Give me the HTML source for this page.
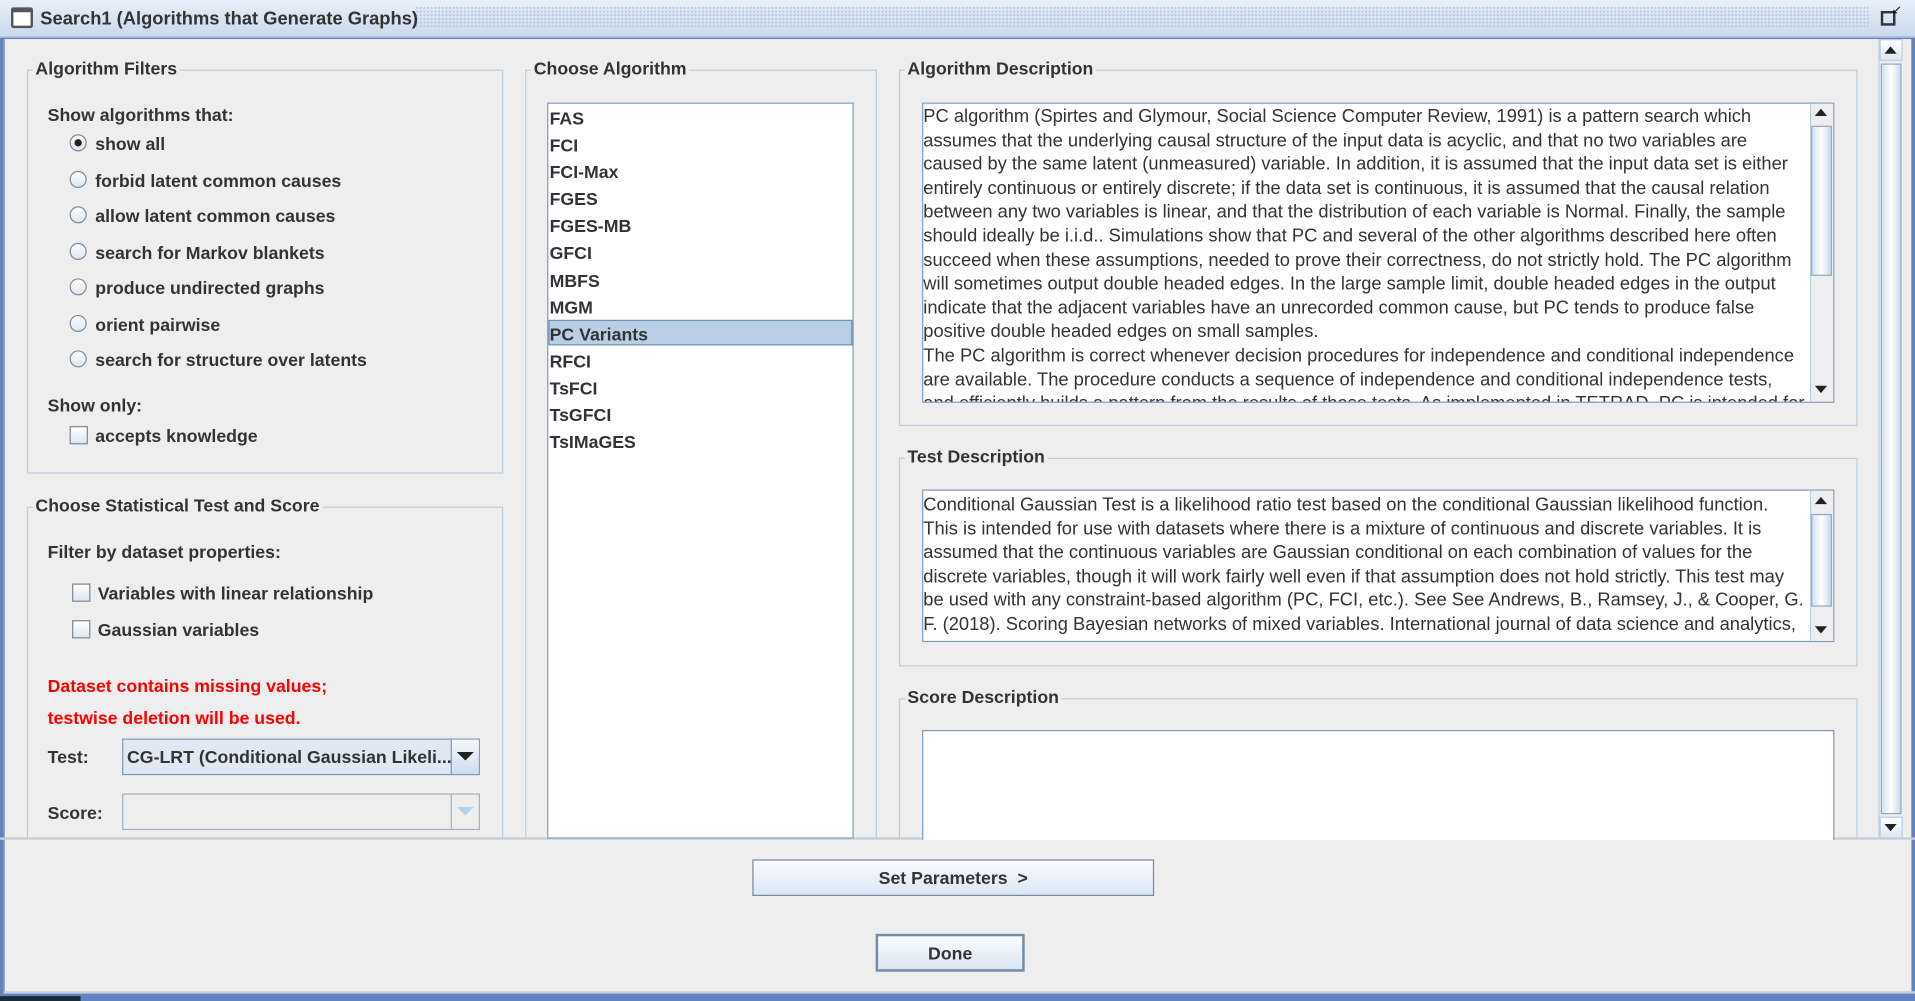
<!DOCTYPE html>
<html><head><meta charset="utf-8"><style>
*{box-sizing:border-box;margin:0;padding:0}
html,body{width:1915px;height:1001px;overflow:hidden;background:#6382bf}
#s{position:absolute;left:0;top:0;width:1568px;height:820px;transform:scale(1.2213,1.2207);transform-origin:0 0;font-family:"Liberation Sans",sans-serif;color:#333}
.a{position:absolute}
.b{font-weight:bold;font-size:14.5px;color:#333;padding-top:2px}
.grp{position:absolute;border:1px solid #b8cfe5}
.gt{position:absolute;top:-9px;left:4px;background:#eee;padding:0 2px;font-weight:bold;font-size:14.5px;color:#333}
.rad{position:absolute;width:14px;height:14px;border-radius:50%;border:1px solid #7a8a9c;background:linear-gradient(#fff,#dde6f0)}
.chk{position:absolute;width:15px;height:15px;border:1px solid #7a8a9c;background:linear-gradient(#fff,#dde6f0)}
.txt{font-size:15px;line-height:19.6px;color:#333;white-space:nowrap;padding-top:1px}
.sb{position:absolute;background:#eee;border-left:1px solid #b8cfe5}
.thumb{position:absolute;border:1px solid #8fa9c8;background:linear-gradient(90deg,#d5e3f2,#fff 50%,#c9dbee)}
.btn{position:absolute;border:1px solid #7a8a9c;background:linear-gradient(#fafcff,#dbe6f3);font-weight:bold;font-size:14.5px;text-align:center;color:#333}
</style></head><body><div id="s">
<div class="a" style="left:0;top:0;width:1568px;height:31px;background:linear-gradient(#e8f0f9,#c9d9ec);border-bottom:1px solid #a9bcd6"></div>
<div class="a" style="left:340px;top:5px;width:1190px;height:18px;background-image:radial-gradient(#b5c8e0 0.8px,transparent 1px);background-size:3px 3px"></div>
<div class="a" style="left:9px;top:6px;width:18px;height:17px;border:2px solid #555;border-top-width:4px;background:#fff;border-radius:2px"></div>
<div class="a b" style="left:33px;top:5px;font-size:15px">Search1 (Algorithms that Generate Graphs)</div>
<div class="a" style="left:1540px;top:9px;width:12px;height:12px;border:2px solid #333"></div>
<div class="a" style="left:1549px;top:3px;font-size:10px;color:#000">↙</div>
<div class="a" style="left:3px;top:32px;width:1562px;height:781px;background:#eee;border-left:1px solid #8a9cb5"></div>
<div class="sb" style="left:1538px;top:32px;width:20px;height:655px"></div>
<div class="a" style="left:1539px;top:32px;width:19px;height:18px;background:linear-gradient(#fff,#dde6f0);border:1px solid #b8cfe5"></div>
<div class="a" style="left:1543px;top:38px;border:5px solid transparent;border-bottom:6px solid #222;border-top:0"></div>
<div class="thumb" style="left:1540px;top:52px;width:17px;height:615px"></div>
<div class="a" style="left:1539px;top:669px;width:19px;height:18px;background:linear-gradient(#fff,#dde6f0);border:1px solid #b8cfe5"></div>
<div class="a" style="left:1543px;top:675px;border:5px solid transparent;border-top:6px solid #222;border-bottom:0"></div>
<div class="a" style="left:0;top:686px;width:1568px;height:2px;background:#c5cfda"></div>

<div class="grp" style="left:22px;top:57px;width:390px;height:331px"><div class="gt">Algorithm Filters</div></div>
<div class="a b" style="left:39px;top:85px">Show algorithms that:</div>
<div class="rad" style="left:57px;top:110px"></div><div class="a" style="left:61px;top:114px;width:6px;height:6px;border-radius:50%;background:#222"></div>
<div class="a b" style="left:78px;top:109px">show all</div>
<div class="rad" style="left:57px;top:140px"></div><div class="a b" style="left:78px;top:139px">forbid latent common causes</div>
<div class="rad" style="left:57px;top:169px"></div><div class="a b" style="left:78px;top:168px">allow latent common causes</div>
<div class="rad" style="left:57px;top:199px"></div><div class="a b" style="left:78px;top:198px">search for Markov blankets</div>
<div class="rad" style="left:57px;top:228px"></div><div class="a b" style="left:78px;top:227px">produce undirected graphs</div>
<div class="rad" style="left:57px;top:258px"></div><div class="a b" style="left:78px;top:257px">orient pairwise</div>
<div class="rad" style="left:57px;top:287px"></div><div class="a b" style="left:78px;top:286px">search for structure over latents</div>
<div class="a b" style="left:39px;top:323px">Show only:</div>
<div class="chk" style="left:57px;top:349px"></div><div class="a b" style="left:78px;top:348px">accepts knowledge</div>

<div class="grp" style="left:22px;top:415px;width:390px;height:290px"><div class="gt">Choose Statistical Test and Score</div></div>
<div class="a b" style="left:39px;top:443px">Filter by dataset properties:</div>
<div class="chk" style="left:59px;top:478px"></div><div class="a b" style="left:80px;top:477px">Variables with linear relationship</div>
<div class="chk" style="left:59px;top:508px"></div><div class="a b" style="left:80px;top:507px">Gaussian variables</div>
<div class="a b" style="left:39px;top:553px;color:#f00">Dataset contains missing values;</div>
<div class="a b" style="left:39px;top:579px;color:#f00">testwise deletion will be used.</div>
<div class="a b" style="left:39px;top:611px">Test:</div>
<div class="a" style="left:100px;top:605px;width:293px;height:30px;border:1px solid #7f9ab8;background:#dfe8f3"></div>
<div class="a b" style="left:104px;top:611px">CG-LRT (Conditional Gaussian Likeli...</div>
<div class="a" style="left:369px;top:606px;width:23px;height:28px;border-left:1px solid #7f9ab8;background:linear-gradient(#f4f8fd,#cfdced)"></div>
<div class="a" style="left:374px;top:616px;border:7px solid transparent;border-top:7px solid #222;border-bottom:0"></div>
<div class="a b" style="left:39px;top:657px">Score:</div>
<div class="a" style="left:100px;top:650px;width:293px;height:30px;border:1px solid #9fb3c8;background:#eee"></div>
<div class="a" style="left:369px;top:651px;width:23px;height:28px;border-left:1px solid #9fb3c8"></div>
<div class="a" style="left:374px;top:661px;border:7px solid transparent;border-top:7px solid #b7d0ea;border-bottom:0"></div>

<div class="grp" style="left:430px;top:57px;width:288px;height:648px"><div class="gt">Choose Algorithm</div></div>
<div class="a" style="left:448px;top:84px;width:251px;height:603px;background:#fff;border:1px solid #7f9ab8"></div>
<div class="a" style="left:449px;top:262px;width:249px;height:21px;background:#b8cfe5;border:1px solid #6f8fb5"></div>
<div class="a b" style="left:450px;top:85px;line-height:22.1px">FAS<br>FCI<br>FCI-Max<br>FGES<br>FGES-MB<br>GFCI<br>MBFS<br>MGM<br>PC Variants<br>RFCI<br>TsFCI<br>TsGFCI<br>TsIMaGES</div>

<div class="grp" style="left:736px;top:57px;width:785px;height:292px"><div class="gt">Algorithm Description</div></div>
<div class="a" style="left:755px;top:84px;width:747px;height:246px;background:#fff;border:1px solid #7f9ab8;overflow:hidden"></div>
<div class="a txt" style="left:756px;top:85px;width:725px;height:244px;overflow:hidden">PC algorithm (Spirtes and Glymour, Social Science Computer Review, 1991) is a pattern search which<br>assumes that the underlying causal structure of the input data is acyclic, and that no two variables are<br>caused by the same latent (unmeasured) variable. In addition, it is assumed that the input data set is either<br>entirely continuous or entirely discrete; if the data set is continuous, it is assumed that the causal relation<br>between any two variables is linear, and that the distribution of each variable is Normal. Finally, the sample<br>should ideally be i.i.d.. Simulations show that PC and several of the other algorithms described here often<br>succeed when these assumptions, needed to prove their correctness, do not strictly hold. The PC algorithm<br>will sometimes output double headed edges. In the large sample limit, double headed edges in the output<br>indicate that the adjacent variables have an unrecorded common cause, but PC tends to produce false<br>positive double headed edges on small samples.<br>The PC algorithm is correct whenever decision procedures for independence and conditional independence<br>are available. The procedure conducts a sequence of independence and conditional independence tests,<br>and efficiently builds a pattern from the results of those tests. As implemented in TETRAD, PC is intended for</div>
<div class="sb" style="left:1482px;top:85px;width:19px;height:244px"></div>
<div class="a" style="left:1486px;top:89px;border:5px solid transparent;border-bottom:6px solid #222;border-top:0"></div>
<div class="thumb" style="left:1483px;top:103px;width:17px;height:123px"></div>
<div class="a" style="left:1486px;top:316px;border:5px solid transparent;border-top:6px solid #222;border-bottom:0"></div>

<div class="grp" style="left:736px;top:375px;width:785px;height:171px"><div class="gt">Test Description</div></div>
<div class="a" style="left:755px;top:401px;width:747px;height:125px;background:#fff;border:1px solid #7f9ab8"></div>
<div class="a txt" style="left:756px;top:403px;width:725px;height:122px;overflow:hidden">Conditional Gaussian Test is a likelihood ratio test based on the conditional Gaussian likelihood function.<br>This is intended for use with datasets where there is a mixture of continuous and discrete variables. It is<br>assumed that the continuous variables are Gaussian conditional on each combination of values for the<br>discrete variables, though it will work fairly well even if that assumption does not hold strictly. This test may<br>be used with any constraint-based algorithm (PC, FCI, etc.). See See Andrews, B., Ramsey, J., &amp; Cooper, G.<br>F. (2018). Scoring Bayesian networks of mixed variables. International journal of data science and analytics,</div>
<div class="sb" style="left:1482px;top:402px;width:19px;height:123px"></div>
<div class="a" style="left:1486px;top:407px;border:5px solid transparent;border-bottom:6px solid #222;border-top:0"></div>
<div class="thumb" style="left:1483px;top:421px;width:17px;height:76px"></div>
<div class="a" style="left:1486px;top:513px;border:5px solid transparent;border-top:6px solid #222;border-bottom:0"></div>

<div class="grp" style="left:736px;top:572px;width:785px;height:130px"><div class="gt">Score Description</div></div>
<div class="a" style="left:755px;top:598px;width:747px;height:100px;background:#fff;border:1px solid #7f9ab8"></div>

<div class="a" style="left:4px;top:688px;width:1561px;height:124px;background:#eee"></div>
<div class="btn" style="left:616px;top:704px;width:329px;height:30px;line-height:30px">Set Parameters &nbsp;&gt;</div>
<div class="btn" style="left:717px;top:765px;width:122px;height:31px;line-height:29px;border:2px solid #6f8aab;padding-top:1px">Done</div>
<div class="a" style="left:3px;top:812px;width:1565px;height:2px;background:#c5cfda"></div>
<div class="a" style="left:0;top:816px;width:66px;height:4px;background:#1a2a3a"></div>
</div></body></html>
